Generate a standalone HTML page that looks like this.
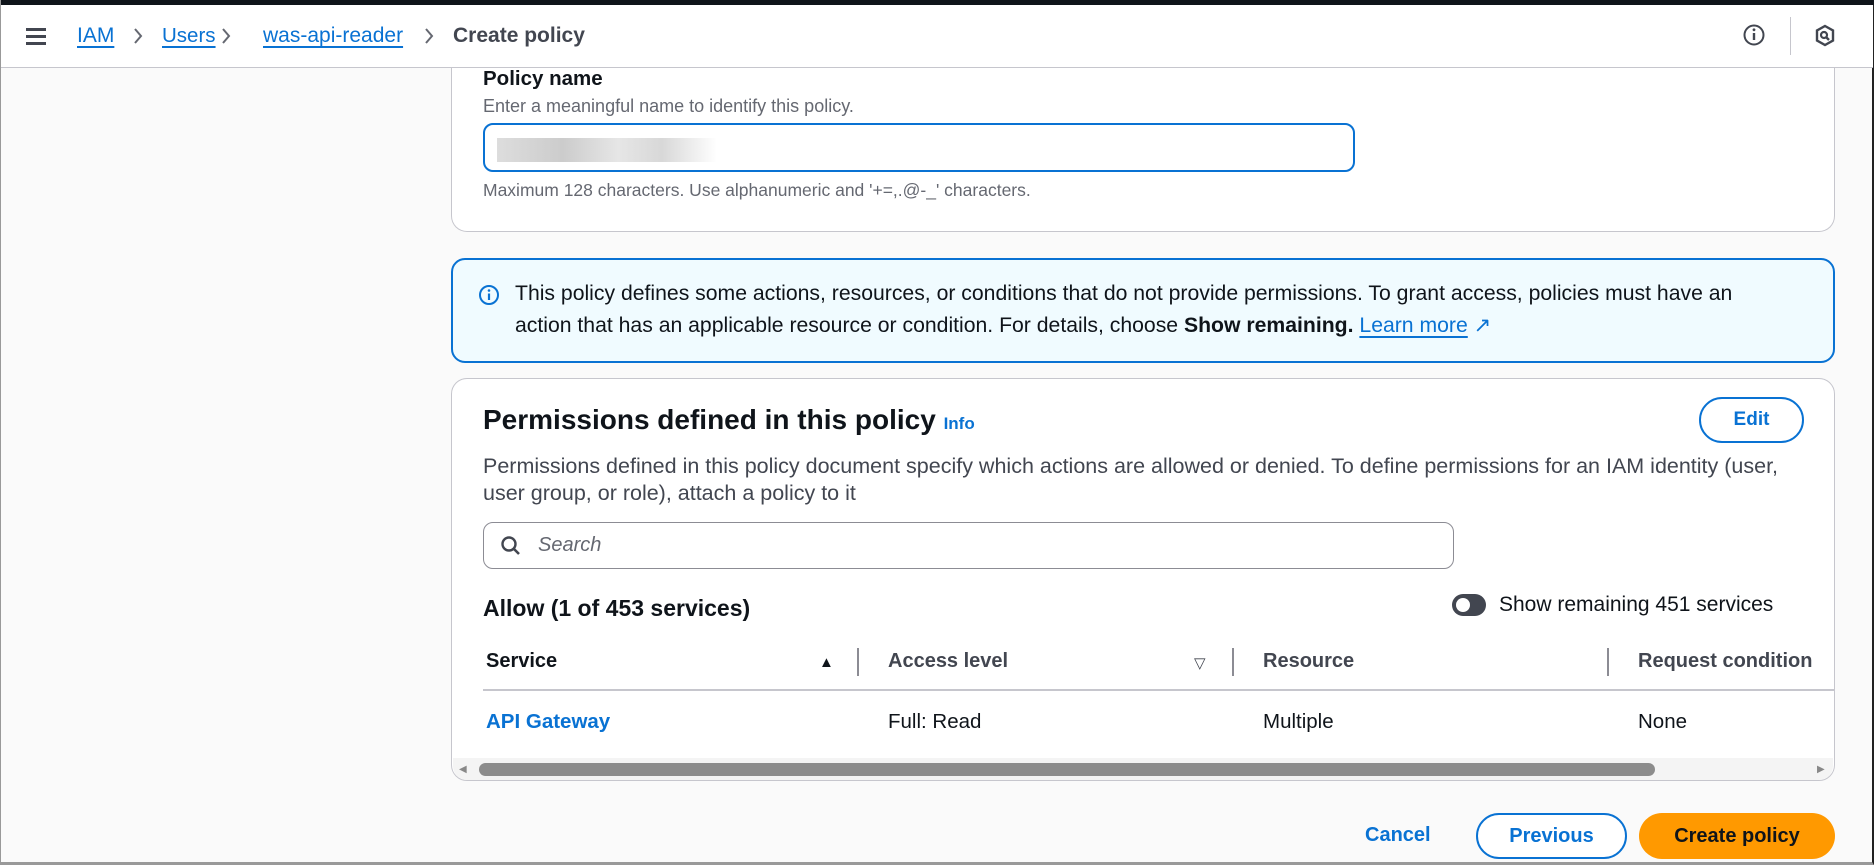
<!DOCTYPE html>
<html><head><meta charset="utf-8"><style>
*{box-sizing:border-box;margin:0;padding:0}
body{width:1874px;height:865px;overflow:hidden;background:#fafafa;font-family:"Liberation Sans",sans-serif;color:#0f141a;position:relative;border-left:1px solid #999;border-right:2px solid #222;border-bottom:3px solid #999}
.top{position:absolute;left:0;top:0;width:1874px;height:5px;background:#0f141a}
.hdr{position:absolute;left:0;top:5px;width:1872px;height:63px;background:#fff;border-bottom:1px solid #c6c6cd}
.abs{position:absolute;white-space:nowrap}
a{color:#0972d3;text-decoration:underline;text-underline-offset:4px}
.card{position:absolute;background:#fff;border:1px solid #c6c6cd;border-radius:16px}
.b{font-weight:bold}
.btn{position:absolute;border-radius:24px;font-weight:bold;font-size:19px;text-align:center}
.chev{position:absolute;top:21px}
</style></head><body>
<div class="top"></div>
<div class="hdr">
 <div class="abs" style="left:25px;top:23px;">
  <div style="height:3px;background:#424650;width:20px;margin-bottom:4px"></div>
  <div style="height:3px;background:#424650;width:20px;margin-bottom:4px"></div>
  <div style="height:3px;background:#424650;width:20px"></div></div>
 <div class="abs" style="left:76px;top:19px;font-size:21px"><a href="#">IAM</a></div>
 <svg class="chev" style="left:131px" width="12" height="20" viewBox="0 0 12 20"><path d="M3 3 L9 10 L3 17" fill="none" stroke="#656871" stroke-width="2"/></svg>
 <div class="abs" style="left:161px;top:19px;font-size:20.5px"><a href="#">Users</a></div>
 <svg class="chev" style="left:219px" width="12" height="20" viewBox="0 0 12 20"><path d="M3 3 L9 10 L3 17" fill="none" stroke="#656871" stroke-width="2"/></svg>
 <div class="abs" style="left:262px;top:19px;font-size:21px"><a href="#">was-api-reader</a></div>
 <svg class="chev" style="left:422px" width="12" height="20" viewBox="0 0 12 20"><path d="M3 3 L9 10 L3 17" fill="none" stroke="#656871" stroke-width="2"/></svg>
 <div class="abs b" style="left:452px;top:19px;font-size:21px;color:#424650">Create policy</div>
 <svg class="abs" style="left:1741px;top:18px" width="24" height="24" viewBox="0 0 24 24"><circle cx="12" cy="12" r="9.5" fill="none" stroke="#424650" stroke-width="2"/><line x1="12" y1="10" x2="12" y2="17" stroke="#424650" stroke-width="2.4"/><circle cx="12" cy="6.8" r="1.4" fill="#424650"/></svg>
 <div class="abs" style="left:1789px;top:12px;width:1px;height:38px;background:#c6c6cd"></div>
 <svg class="abs" style="left:1813px;top:19px" width="22" height="24" viewBox="0 0 22 24"><path d="M11 2 L19 6.5 V16.5 L11 21 L3 16.5 V6.5Z" fill="none" stroke="#424650" stroke-width="2.4"/><circle cx="10" cy="11" r="3" fill="none" stroke="#424650" stroke-width="2.2"/><line x1="12" y1="13" x2="15" y2="16" stroke="#424650" stroke-width="2.4"/></svg>
</div>
<div class="card" style="left:450px;top:20px;width:1384px;height:212px;border-top:none;border-radius:0 0 16px 16px;z-index:-1"></div>
<div class="abs b" style="left:482px;top:67px;font-size:20.5px">Policy name</div>
<div class="abs" style="left:482px;top:96px;font-size:18px;color:#656871">Enter a meaningful name to identify this policy.</div>
<div class="abs" style="left:482px;top:123px;width:872px;height:49px;border:2px solid #0972d3;border-radius:10px;background:#fff">
 <div style="position:absolute;left:12px;top:13px;width:220px;height:24px;background:linear-gradient(90deg,#ddd,#ccc 30%,#e6e6e6 55%,#d8d8d8 75%,#fff)"></div></div>
<div class="abs" style="left:482px;top:180px;font-size:17.5px;color:#656871">Maximum 128 characters. Use alphanumeric and '+=,.@-_' characters.</div>

<div class="abs" style="left:450px;top:258px;width:1384px;height:105px;background:#f0fbff;border:2px solid #0972d3;border-radius:14px"></div>
<svg class="abs" style="left:477px;top:284px" width="22" height="22" viewBox="0 0 22 22"><circle cx="11" cy="11" r="9" fill="none" stroke="#0972d3" stroke-width="2"/><line x1="11" y1="9.5" x2="11" y2="16" stroke="#0972d3" stroke-width="2.2"/><circle cx="11" cy="6.5" r="1.3" fill="#0972d3"/></svg>
<div class="abs" style="left:514px;top:278px;font-size:21.2px;line-height:32px">This policy defines some actions, resources, or conditions that do not provide permissions. To grant access, policies must have an<br>action that has an applicable resource or condition. For details, choose <span class="b">Show remaining.</span> <a href="#">Learn more</a> <span style="color:#0972d3">&#x2197;</span></div>

<div class="card" style="left:450px;top:378px;width:1384px;height:403px"></div>
<div class="abs b" style="left:482px;top:404px;font-size:28px">Permissions defined in this policy <span style="font-size:17px;color:#0972d3">Info</span></div>
<div class="btn" style="left:1698px;top:397px;width:105px;height:46px;border:2px solid #0972d3;color:#0972d3;line-height:42px">Edit</div>
<div class="abs" style="left:482px;top:453px;font-size:21.5px;line-height:27px;color:#424650">Permissions defined in this policy document specify which actions are allowed or denied. To define permissions for an IAM identity (user,<br>user group, or role), attach a policy to it</div>
<div class="abs" style="left:482px;top:522px;width:971px;height:47px;border:1px solid #8c8c94;border-radius:10px;background:#fff">
 <svg style="position:absolute;left:16px;top:12px" width="22" height="22" viewBox="0 0 22 22"><circle cx="9" cy="9" r="6.5" fill="none" stroke="#424650" stroke-width="2.4"/><line x1="14" y1="14" x2="19" y2="19" stroke="#424650" stroke-width="2.6"/></svg>
 <span style="position:absolute;left:54px;top:11px;font-size:20px;font-style:italic;color:#656871">Search</span></div>
<div class="abs b" style="left:482px;top:595px;font-size:23px">Allow (1 of 453 services)</div>
<div class="abs" style="left:1451px;top:594px;width:34px;height:22px;border-radius:11px;background:#424650"><div style="position:absolute;left:4px;top:4px;width:14px;height:14px;border-radius:7px;background:#fff"></div></div>
<div class="abs" style="left:1498px;top:593px;font-size:21px;color:#0f141a">Show remaining 451 services</div>
<div class="abs b" style="left:485px;top:650px;font-size:20px">Service</div>
<div class="abs" style="left:818px;top:654px;font-size:15px">&#9650;</div>
<div class="abs" style="left:856px;top:648px;width:2px;height:28px;background:#8c8c94"></div>
<div class="abs b" style="left:887px;top:650px;font-size:20px;color:#424650">Access level</div>
<div class="abs" style="left:1193px;top:654px;font-size:15px;color:#424650">&#9661;</div>
<div class="abs" style="left:1231px;top:648px;width:2px;height:28px;background:#8c8c94"></div>
<div class="abs b" style="left:1262px;top:650px;font-size:20px;color:#424650">Resource</div>
<div class="abs" style="left:1606px;top:648px;width:2px;height:28px;background:#8c8c94"></div>
<div class="abs b" style="left:1637px;top:650px;font-size:20px;color:#424650">Request condition</div>
<div class="abs" style="left:482px;top:689px;width:1352px;height:2px;background:#c6c6cd"></div>
<div class="abs b" style="left:485px;top:710px;font-size:20.5px;color:#0972d3">API Gateway</div>
<div class="abs" style="left:887px;top:710px;font-size:20.5px">Full: Read</div>
<div class="abs" style="left:1262px;top:710px;font-size:20.5px">Multiple</div>
<div class="abs" style="left:1637px;top:710px;font-size:20.5px">None</div>
<div class="abs" style="left:452px;top:758px;width:1380px;height:22px;background:#f4f4f4;border-radius:0 0 14px 14px"></div>
<div class="abs" style="left:478px;top:763px;width:1176px;height:13px;border-radius:7px;background:#8c8c8c"></div>
<div class="abs" style="left:458px;top:764px;font-size:10px;color:#888">&#9664;</div>
<div class="abs" style="left:1816px;top:764px;font-size:10px;color:#888">&#9654;</div>

<div class="abs b" style="left:1364px;top:824px;font-size:20px;color:#0972d3">Cancel</div>
<div class="btn" style="left:1475px;top:813px;width:151px;height:46px;border:2px solid #0972d3;color:#0972d3;line-height:42px;background:#fff;font-size:20px">Previous</div>
<div class="btn" style="left:1638px;top:813px;width:196px;height:46px;background:#ff9900;color:#0f141a;line-height:46px;font-size:20px">Create policy</div>
</body></html>
